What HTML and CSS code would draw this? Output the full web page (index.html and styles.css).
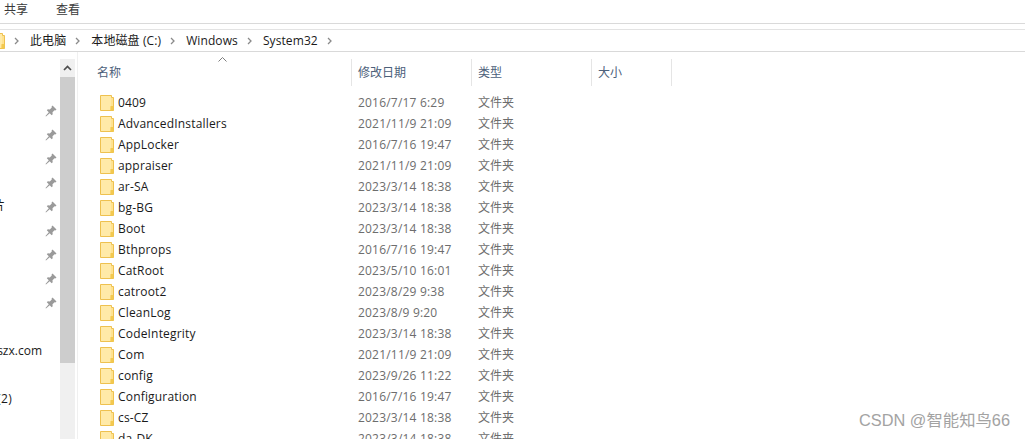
FILE: index.html
```html
<!DOCTYPE html>
<html lang="zh">
<head>
<meta charset="utf-8">
<title>System32</title>
<link rel="stylesheet" href="styles.css">
</head>
<body>
<svg class="defs" width="0" height="0">
  <defs>
    <symbol id="folder" viewBox="0 0 14 16">
      <path d="M.5.5h11v2h2v13H.5z" fill="#ffe28f" stroke="#eec14f"/>
      <path d="M1 1h10v11.500h-1V15H1z" fill="#ffeaa8"/>
      <path d="M10.500 11h3v4.500h-3z" fill="#f3c94f"/>
    </symbol>
    <symbol id="pin" viewBox="0 0 12 12">
      <path d="M7.500 .5l4 4-1.200 1-.8-.3-2 2 .2 2-1 1-2-2L1 11.500l-.5-.5 3.300-3.700-2-2 1-1 2 .2 2-2-.3-.8z" fill="#9a9a9a"/>
    </symbol>
    <symbol id="crumb" viewBox="0 0 5 8">
      <path d="M1 1l3 3-3 3" fill="none" stroke="#8a8a8a" stroke-width="1.300"/>
    </symbol>
  </defs>
</svg>
<div class="window">
  <div class="tabs"><span class="tab">共享</span><span class="tab">查看</span></div>
  <div class="gap"></div>
  <div class="address">
    <svg class="addr-folder" width="14" height="16"><use href="#folder"/></svg>
    <svg class="chev" width="5" height="8"><use href="#crumb"/></svg><span class="seg">此电脑</span>
    <svg class="chev" width="5" height="8"><use href="#crumb"/></svg><span class="seg">本地磁盘 (C:)</span>
    <svg class="chev" width="5" height="8"><use href="#crumb"/></svg><span class="seg">Windows</span>
    <svg class="chev" width="5" height="8"><use href="#crumb"/></svg><span class="seg">System32</span>
    <svg class="chev" width="5" height="8"><use href="#crumb"/></svg>
  </div>
  <div class="main">
    <aside class="nav">
      <div class="nav-row"><svg class="pin" width="12" height="12"><use href="#pin"/></svg></div>
      <div class="nav-row"><svg class="pin" width="12" height="12"><use href="#pin"/></svg></div>
      <div class="nav-row"><svg class="pin" width="12" height="12"><use href="#pin"/></svg></div>
      <div class="nav-row"><svg class="pin" width="12" height="12"><use href="#pin"/></svg></div>
      <div class="nav-row"><span class="nav-cut">片</span><svg class="pin" width="12" height="12"><use href="#pin"/></svg></div>
      <div class="nav-row"><svg class="pin" width="12" height="12"><use href="#pin"/></svg></div>
      <div class="nav-row"><svg class="pin" width="12" height="12"><use href="#pin"/></svg></div>
      <div class="nav-row"><svg class="pin" width="12" height="12"><use href="#pin"/></svg></div>
      <div class="nav-row"><svg class="pin" width="12" height="12"><use href="#pin"/></svg></div>
      <div class="nav-row"></div>
      <div class="nav-row"><span class="nav-text">szx.com</span></div>
      <div class="nav-row"></div>
      <div class="nav-row"><span class="nav-text nav-paren">(2)</span></div>
    </aside>
    <div class="scrollbar">
      <div class="scroll-btn"><svg width="9" height="6" viewBox="0 0 9 6"><path d="M1 5l3.500-3.500L8 5" fill="none" stroke="#4d4d4d" stroke-width="1.700"/></svg></div>
      <div class="scroll-thumb"></div>
    </div>
    <section class="list">
      <div class="sort"><svg width="9" height="5" viewBox="0 0 9 5"><path d="M.5 4.500l4-4 4 4" fill="none" stroke="#7d7d7d"/></svg></div>
      <div class="head">
        <div class="col col-name">名称</div>
        <div class="col col-date">修改日期</div>
        <div class="col col-type">类型</div>
        <div class="col col-size">大小</div>
      </div>
      <div class="rows">
        <div class="row"><svg class="ficon" width="14" height="16"><use href="#folder"/></svg><span class="name">0409</span><span class="date">2016/7/17 6:29</span><span class="type">文件夹</span></div>
        <div class="row"><svg class="ficon" width="14" height="16"><use href="#folder"/></svg><span class="name">AdvancedInstallers</span><span class="date">2021/11/9 21:09</span><span class="type">文件夹</span></div>
        <div class="row"><svg class="ficon" width="14" height="16"><use href="#folder"/></svg><span class="name">AppLocker</span><span class="date">2016/7/16 19:47</span><span class="type">文件夹</span></div>
        <div class="row"><svg class="ficon" width="14" height="16"><use href="#folder"/></svg><span class="name">appraiser</span><span class="date">2021/11/9 21:09</span><span class="type">文件夹</span></div>
        <div class="row"><svg class="ficon" width="14" height="16"><use href="#folder"/></svg><span class="name">ar-SA</span><span class="date">2023/3/14 18:38</span><span class="type">文件夹</span></div>
        <div class="row"><svg class="ficon" width="14" height="16"><use href="#folder"/></svg><span class="name">bg-BG</span><span class="date">2023/3/14 18:38</span><span class="type">文件夹</span></div>
        <div class="row"><svg class="ficon" width="14" height="16"><use href="#folder"/></svg><span class="name">Boot</span><span class="date">2023/3/14 18:38</span><span class="type">文件夹</span></div>
        <div class="row"><svg class="ficon" width="14" height="16"><use href="#folder"/></svg><span class="name">Bthprops</span><span class="date">2016/7/16 19:47</span><span class="type">文件夹</span></div>
        <div class="row"><svg class="ficon" width="14" height="16"><use href="#folder"/></svg><span class="name">CatRoot</span><span class="date">2023/5/10 16:01</span><span class="type">文件夹</span></div>
        <div class="row"><svg class="ficon" width="14" height="16"><use href="#folder"/></svg><span class="name">catroot2</span><span class="date">2023/8/29 9:38</span><span class="type">文件夹</span></div>
        <div class="row"><svg class="ficon" width="14" height="16"><use href="#folder"/></svg><span class="name">CleanLog</span><span class="date">2023/8/9 9:20</span><span class="type">文件夹</span></div>
        <div class="row"><svg class="ficon" width="14" height="16"><use href="#folder"/></svg><span class="name">CodeIntegrity</span><span class="date">2023/3/14 18:38</span><span class="type">文件夹</span></div>
        <div class="row"><svg class="ficon" width="14" height="16"><use href="#folder"/></svg><span class="name">Com</span><span class="date">2021/11/9 21:09</span><span class="type">文件夹</span></div>
        <div class="row"><svg class="ficon" width="14" height="16"><use href="#folder"/></svg><span class="name">config</span><span class="date">2023/9/26 11:22</span><span class="type">文件夹</span></div>
        <div class="row"><svg class="ficon" width="14" height="16"><use href="#folder"/></svg><span class="name">Configuration</span><span class="date">2016/7/16 19:47</span><span class="type">文件夹</span></div>
        <div class="row"><svg class="ficon" width="14" height="16"><use href="#folder"/></svg><span class="name">cs-CZ</span><span class="date">2023/3/14 18:38</span><span class="type">文件夹</span></div>
        <div class="row"><svg class="ficon" width="14" height="16"><use href="#folder"/></svg><span class="name">da-DK</span><span class="date">2023/3/14 18:38</span><span class="type">文件夹</span></div>
      </div>
      <div class="watermark">CSDN @智能知鸟66</div>
    </section>
  </div>
</div>
</body>
</html>
```

FILE: styles.css
```css
* { box-sizing: border-box; }
html, body { margin: 0; height: 100%; overflow: hidden; background: #fff; }
body { font: 12px/16px "Open Sans", "Noto Sans CJK SC", sans-serif; color: #1a1a1a; }
.defs { position: absolute; }
.window { height: 439px; display: flex; flex-direction: column; overflow: hidden; }
.tabs { height: 24px; display: flex; gap: 28px; padding: 2px 0 0 4px; border-bottom: 1px solid #dadada; color: #3a3a3a; }
.gap { height: 6px; border-bottom: 1px solid #e3e3e3; flex: none; }
.address { height: 22px; flex: none; display: flex; align-items: center; border-bottom: 1px solid #d9d9d9; overflow: hidden; }
.addr-folder { margin-left: -9px; flex: none; }
.chev { flex: none; margin-left: 9px; }
.seg { margin-left: 11px; white-space: nowrap; letter-spacing: .1px; }
.main { flex: 1; display: flex; min-height: 0; }
.nav { width: 60px; flex: none; padding-top: 47px; overflow: hidden; }
.nav-row { height: 24px; display: flex; align-items: center; justify-content: flex-end; position: relative; padding-right: 3px; }
.pin { flex: none; }
.nav-text { white-space: nowrap; margin-right: 15px; }
.nav-paren { margin-right: 45px; letter-spacing: .3px; }
.nav-cut { position: absolute; left: -7px; top: 3px; }
.scrollbar { width: 15px; flex: none; margin-top: 7px; background: #f0f0f0; }
.scroll-btn { height: 18px; display: flex; align-items: center; justify-content: center; }
.scroll-thumb { height: 286px; background: #cdcdcd; }
.list { flex: 1; position: relative; margin-left: 2px; border-left: 1px solid #f0f0f0; padding-left: 19px; min-width: 0; }
.sort { position: absolute; left: 140px; top: 5px; line-height: 0; }
.head { display: flex; margin-top: 7px; height: 27px; color: #4c607a; }
.col { padding-top: 6px; border-right: 1px solid #e5e5e5; }
.col-name { width: 255px; }
.col-date { width: 120px; padding-left: 6px; }
.col-type { width: 120px; padding-left: 6px; }
.col-size { width: 80px; padding-left: 6px; }
.rows { padding: 6px 0 0 3px; }
.row { height: 21px; display: flex; align-items: center; }
.ficon { flex: none; margin-right: 4px; }
.name { width: 240px; color: #1a1a1a; white-space: nowrap; letter-spacing: .18px; }
.date { width: 120px; color: #6d6d6d; white-space: nowrap; letter-spacing: .2px; }
.type { color: #6d6d6d; }
.watermark { position: absolute; right: 15px; bottom: 9px; font: 16.350px/20px "Liberation Sans", "Noto Sans CJK SC", sans-serif; color: #a3a3a3; white-space: nowrap; }
```
